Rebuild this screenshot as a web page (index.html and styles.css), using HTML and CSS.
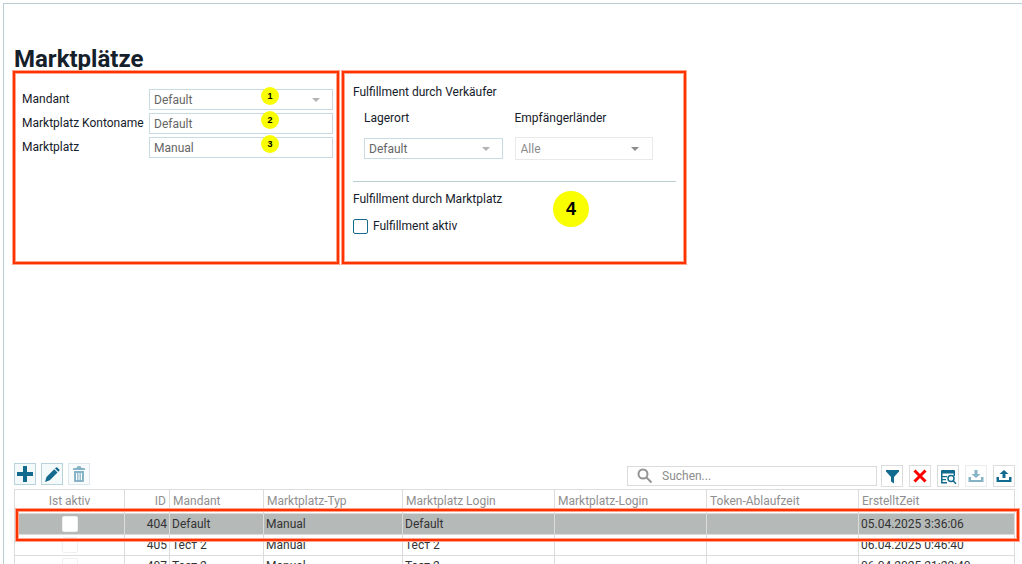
FILE: index.html
```html
<!DOCTYPE html>
<html lang="de">
<head>
  <meta charset="UTF-8" />
  <meta name="viewport" content="width=device-width, initial-scale=1.0" />
  <title>Marktplätze</title>
  <link rel="stylesheet" href="styles.css">
</head>
<body>
  <main class="window">
    <section class="details">
      <h1>Marktplätze</h1>
      <div class="panels">
        <form class="panel account">
          <label for="mandant">Mandant</label>
          <div class="select">
            <select id="mandant"><option>Default</option></select>
            <span class="badge">1</span>
          </div>
          <label for="kontoname">Marktplatz Kontoname</label>
          <div class="field">
            <input type="text" id="kontoname" value="Default" />
            <span class="badge">2</span>
          </div>
          <label for="marktplatz">Marktplatz</label>
          <div class="field">
            <input type="text" id="marktplatz" value="Manual" />
            <span class="badge">3</span>
          </div>
        </form>

        <form class="panel fulfillment">
          <h2>Fulfillment durch Verkäufer</h2>
          <div class="columns">
            <div class="column">
              <label for="lagerort">Lagerort</label>
              <div class="select">
                <select id="lagerort"><option>Default</option></select>
              </div>
            </div>
            <div class="column">
              <label for="laender">Empfängerländer</label>
              <div class="select light">
                <select id="laender"><option>Alle</option></select>
              </div>
            </div>
          </div>
          <hr />
          <h2>Fulfillment durch Marktplatz</h2>
          <label class="check"><input type="checkbox" /> Fulfillment aktiv</label>
          <span class="badge big">4</span>
        </form>
      </div>
    </section>

    <section class="list">
      <div class="toolbar">
        <div class="actions">
          <button type="button" class="tool" aria-label="Neu">
            <svg viewBox="0 0 20 20"><path d="M8 2h4v6h6v4h-6v6H8v-6H2V8h6z"/></svg>
          </button>
          <button type="button" class="tool" aria-label="Bearbeiten">
            <svg viewBox="0 0 20 20"><path d="M3 18l1.500-5 7.700-7.700 3.300 3.300L7.800 16.300zM13 4.500l1-1q.6-.5 1.200 0l2.100 2.100q.5.600 0 1.200l-1 1z"/></svg>
          </button>
          <button type="button" class="tool" aria-label="Löschen" disabled>
            <svg viewBox="0 0 20 20"><path fill-rule="evenodd" d="M4 5q0-1 1-1h2.500q0-2 2.500-2t2.500 2H15q1 0 1 1v1H4zM5 7h10v10q0 1-1 1H6q-1 0-1-1zM7 9v7h1.200V9zM9.400 9v7h1.200V9zM11.800 9v7H13V9z"/></svg>
          </button>
        </div>
        <div class="search">
          <svg viewBox="0 0 16 16"><circle cx="6" cy="6" r="4.500"/><path d="M9.500 9.500l5 5"/></svg>
          <input type="search" placeholder="Suchen..." aria-label="Suchen" />
        </div>
        <div class="tools">
          <button type="button" class="tool" aria-label="Filter">
            <svg viewBox="0 0 20 20"><path d="M4 4h13v1.500L12 11v6.500l-3-2V11L4 5.500z"/></svg>
          </button>
          <button type="button" class="tool" aria-label="Filter löschen">
            <svg class="cross" viewBox="0 0 20 20"><path d="M4.500 4.500l11 11M15.500 4.500l-11 11"/></svg>
          </button>
          <button type="button" class="tool" aria-label="Spalten">
            <svg viewBox="0 0 20 20"><path fill-rule="evenodd" d="M3 5q0-1 1-1h12q1 0 1 1v5h-1.500V7.500h-11V10H9v1.300H4.500V13H8v1.300H4.500V16H9v1.500H3z"/><path class="line" d="M15.200 14.700l2.800 3M10 12.500a3 3 0 1 0 6 0a3 3 0 1 0-6 0"/></svg>
          </button>
          <button type="button" class="tool" aria-label="Importieren" disabled>
            <svg viewBox="0 0 20 20"><path d="M8.500 4h3v4h3L10 12 5.500 8h3zM2.500 11H5v3h10v-3h2.500v5h-15z"/></svg>
          </button>
          <button type="button" class="tool" aria-label="Exportieren">
            <svg viewBox="0 0 20 20"><path d="M8.500 12h3V8h3L10 4 5.500 8h3zM2.500 11H5v3h10v-3h2.500v5h-15z"/></svg>
          </button>
        </div>
      </div>

      <table class="grid">
        <colgroup>
          <col class="w-active"><col class="w-id"><col class="w-client"><col class="w-type">
          <col class="w-login"><col class="w-login"><col class="w-login"><col class="w-date">
        </colgroup>
        <thead>
          <tr>
            <th class="center">Ist aktiv</th>
            <th class="right">ID</th>
            <th>Mandant</th>
            <th>Marktplatz-Typ</th>
            <th>Marktplatz Login</th>
            <th>Marktplatz-Login</th>
            <th>Token-Ablaufzeit</th>
            <th>ErstelltZeit</th>
          </tr>
        </thead>
        <tbody>
          <tr class="selected">
            <td class="center"><input type="checkbox" aria-label="Ist aktiv" /></td>
            <td class="right">404</td>
            <td>Default</td>
            <td>Manual</td>
            <td>Default</td>
            <td></td>
            <td></td>
            <td>05.04.2025 3:36:06</td>
          </tr>
          <tr>
            <td class="center"><input type="checkbox" aria-label="Ist aktiv" /></td>
            <td class="right">405</td>
            <td>Тест 2</td>
            <td>Manual</td>
            <td>Тест 2</td>
            <td></td>
            <td></td>
            <td>06.04.2025 0:46:40</td>
          </tr>
          <tr>
            <td class="center"><input type="checkbox" aria-label="Ist aktiv" /></td>
            <td class="right">407</td>
            <td>Тест 2</td>
            <td>Manual</td>
            <td>Тест 2</td>
            <td></td>
            <td></td>
            <td>06.04.2025 21:22:40</td>
          </tr>
        </tbody>
      </table>
    </section>
  </main>
</body>
</html>
```

FILE: styles.css
```css
* {
  box-sizing: border-box;
}

body {
  margin: 0;
  padding: 3px 0 0 3px;
  height: 100vh;
  overflow: hidden;
  background-color: white;
  color: #15202a;
  font-family: Roboto, "Liberation Sans", sans-serif;
  font-size: 12px;
  line-height: 16px;
}

input,
select,
button {
  font: inherit;
  color: inherit;
  margin: 0;
}

.window {
  display: flex;
  flex-direction: column;
  height: 100%;
  border-top: 1px solid #b9ced3;
  border-left: 1px solid #b9ced3;
}

.details {
  flex: 1;
  padding: 40px 8px 0;
}

h1 {
  margin: 0 2px;
  font-size: 24px;
  line-height: 30px;
  height: 26px;
}

h2 {
  margin: 0;
  font-size: 12px;
  font-weight: normal;
}

.panels {
  display: flex;
  align-items: stretch;
  gap: 1px;
}

.panel,
.selected td:first-child::after {
  border: 1px solid #ffa38c;
  box-shadow: inset 0 0 0 2px #ff3300, inset 0 0 0 3px #ffa38c;
}

.panel {
  position: relative;
  min-height: 195px;
}

.account {
  flex: 0 1 328px;
  display: grid;
  grid-template-columns: 1fr 184px;
  align-content: start;
  gap: 3px 4px;
  padding: 18px 6px 0 9px;
}

.account label {
  padding-top: 2px;
  white-space: nowrap;
}

.select,
.field {
  position: relative;
}

.select select,
.field input {
  display: block;
  width: 100%;
  height: 21px;
  padding: 0 4px;
  border: 1px solid #c9dbe2;
  border-radius: 0;
  background-color: white;
  color: #666;
  appearance: none;
}

.select::after {
  content: "";
  position: absolute;
  top: 9px;
  right: 13px;
  border: 4px solid transparent;
  border-top-color: #b4b4b4;
  border-bottom: none;
}

.select.light {
  margin-top: -1px;
}

.select.light select {
  height: 23px;
  padding: 0 5px;
  border-color: #e8eaea;
  color: #8c8c8c;
}

.select.light::after {
  top: 10px;
  right: 14px;
  border-top-color: #8c8c8c;
}

.badge {
  position: absolute;
  top: -2px;
  right: 54px;
  width: 18px;
  height: 18px;
  border-radius: 50%;
  background-color: #f9ff00;
  color: black;
  font: bold 9px/18px "Liberation Sans", sans-serif;
  text-align: center;
}

.badge.big {
  top: 120px;
  right: 97px;
  width: 36px;
  height: 36px;
  font-size: 18px;
  line-height: 36px;
}

.fulfillment {
  flex: 0 1 346px;
  padding: 13px 10px 0 11px;
}

.columns {
  display: flex;
  gap: 12px;
  padding: 10px 23px 0 11px;
}

.column {
  flex: 1;
  display: flex;
  flex-direction: column;
  gap: 12px;
}

hr {
  margin: 21px 0 9px;
  border: none;
  border-top: 1px solid #b9ced3;
}

.check {
  display: flex;
  align-items: center;
  gap: 5px;
  margin-top: 11px;
}

.check input {
  width: 15px;
  height: 15px;
  border: 1px solid #176b8f;
  border-radius: 2px;
  appearance: none;
}

/* Liste */
.list {
  flex: 0 0 101px;
  padding: 0 7px 0 10px;
  overflow: hidden;
}

.toolbar {
  display: flex;
  height: 26px;
}

.actions {
  display: flex;
  gap: 5px;
  margin-right: auto;
}

.tools {
  display: flex;
  gap: 6px;
  padding-top: 2px;
}

.tool {
  width: 22px;
  height: 22px;
  padding: 0;
  border: 1px solid #dcdcdc;
  background-color: white;
}

.actions .tool {
  border-color: #b9d3dc;
  background-color: #f4f9fa;
}

.tool svg {
  display: block;
  width: 20px;
  height: 20px;
  fill: #126a8e;
}

.tool:disabled {
  opacity: 0.5;
}

.tool .cross {
  fill: none;
  stroke: #f00;
  stroke-width: 3;
}

.tool .line {
  fill: white;
  stroke: #126a8e;
  stroke-width: 1.5;
}

.search {
  display: flex;
  align-items: center;
  flex: 0 1 250px;
  gap: 9px;
  height: 20px;
  margin: 3px 4px 0 0;
  padding-left: 9px;
  border: 1px solid #dcdcdc;
}

.search svg {
  width: 16px;
  height: 16px;
  fill: none;
  stroke: #949494;
  stroke-width: 2;
}

.search input {
  flex: 1;
  min-width: 0;
  padding: 0;
  border: none;
  outline: none;
}

.search input::placeholder {
  color: #8c8c8c;
}

.grid {
  width: 100%;
  table-layout: fixed;
  border-collapse: collapse;
}

.w-active { width: 110px; }
.w-id { width: 45px; }
.w-client { width: 94px; }
.w-type { width: 139px; }
.w-login { width: 152px; }

.grid th,
.grid td {
  height: 21px;
  padding: 0 2px;
  border: 1px solid #dcdcdc;
  text-align: left;
  white-space: nowrap;
}

.grid th {
  height: 24px;
  padding: 0 3px 2px;
  color: #8f8f8f;
  font-weight: normal;
}

.grid td {
  color: #333;
}

.grid .center {
  text-align: center;
}

.grid .right {
  text-align: right;
}

.grid input {
  display: block;
  width: 16px;
  height: 16px;
  margin: 0 auto;
  border: 1px solid #f0f0f0;
  border-radius: 2px;
  background-color: white;
  appearance: none;
}

.selected {
  position: relative;
  background-color: #b5b9b8;
}

.selected td:first-child::after {
  content: "";
  position: absolute;
  inset: -6px -5px -7px 0;
  pointer-events: none;
}
```
